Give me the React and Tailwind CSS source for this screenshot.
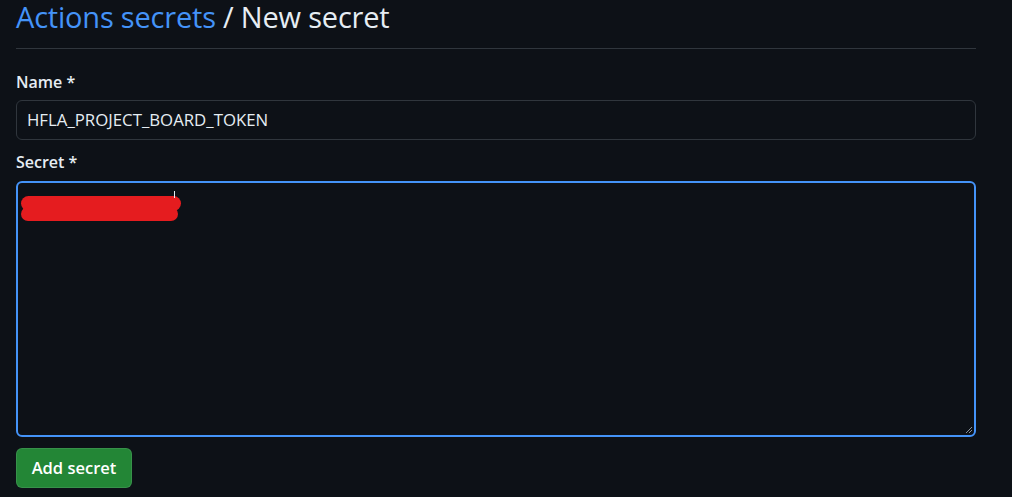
import React from 'react';

const App = () => {
    return (
        <div className="min-h-screen w-full bg-[#0d1117] text-[#e6edf3]" style={{ fontFamily: '"Open Sans", "Noto Sans", sans-serif' }}>
            <div className="w-[960px] ml-4 flex flex-col">
                {/* HEADER */}
                <div className="h-[49px] border-b border-[#30363d]">
                    <h1 className="text-[29px] leading-[34px] font-normal tracking-[-0.2px]">
                        <span className="text-[#4493f8]">Actions secrets</span>
                        <span className="text-[#e6edf3]"> / New secret</span>
                    </h1>
                </div>

                {/* NAME */}
                <label className="mt-[21px] h-6 text-[16px] leading-6 font-semibold">Name *</label>
                <div className="mt-[6px] h-10 rounded-md border border-[#30363d] bg-[#0d1117] flex items-center px-[10px]">
                    <span className="text-[16.8px] text-[#e6edf3]">HFLA_PROJECT_BOARD_TOKEN</span>
                </div>

                {/* SECRET */}
                <label className="mt-[10px] h-6 text-[16px] leading-6 font-semibold">Secret *</label>
                <div className="mt-[7px] h-[256px] rounded-md border-2 border-[#4493f8] bg-[#0d1117] relative">
                    {/* redaction marks */}
                    <div className="absolute left-[3px] top-[13px] w-[160px] h-[15px] rounded-full bg-[#e51c1f]"></div>
                    <div className="absolute left-[3px] top-[24px] w-[157px] h-[14px] rounded-full bg-[#e51c1f]"></div>
                    <div className="absolute left-[156px] top-[8px] w-px h-[7px] bg-[#e6edf3]"></div>
                    <svg className="absolute right-[1px] bottom-[1px]" width="9" height="9" viewBox="0 0 9 9">
                        <path d="M8 2 L2 8 M8 5 L5 8" stroke="#8b949e" strokeWidth="1" />
                    </svg>
                </div>

                {/* SUBMIT */}
                <div className="mt-[11px]">
                    <button className="h-10 w-[116px] rounded-md bg-[#238636] border border-[rgba(240,246,252,0.1)] text-white text-[16.5px] font-semibold">
                        Add secret
                    </button>
                </div>
            </div>
        </div>
    );
};

export default App;
